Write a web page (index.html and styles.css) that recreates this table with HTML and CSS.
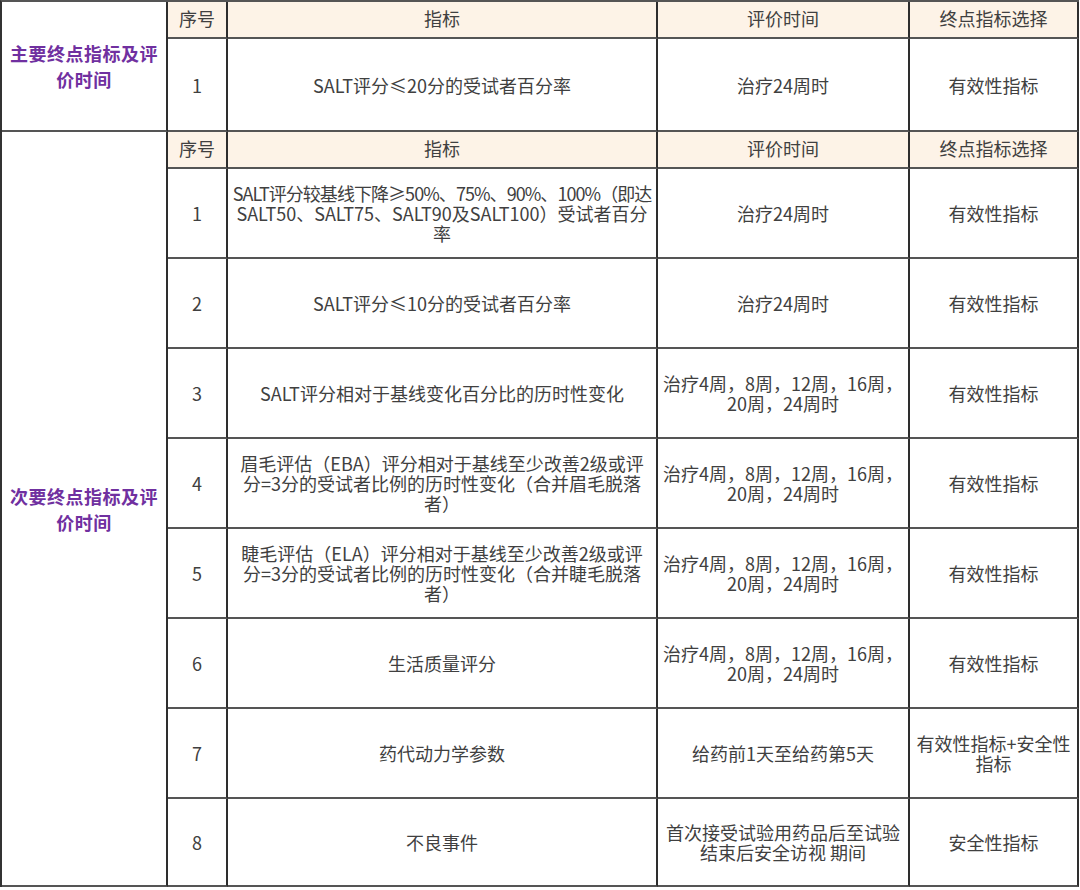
FILE: index.html
```html
<!DOCTYPE html>
<html lang="zh-CN">
<head>
<meta charset="utf-8">
<title>终点指标及评价时间</title>
<link rel="stylesheet" href="styles.css">
</head>
<body>
<table class="grid">
  <colgroup>
    <col class="c-cat">
    <col class="c-no">
    <col class="c-ind">
    <col class="c-time">
    <col class="c-sel">
  </colgroup>
  <tbody>
    <tr class="r-head">
      <td class="cat" rowspan="2">主要终点指标及评<br>价时间</td>
      <td class="head">序号</td>
      <td class="head">指标</td>
      <td class="head">评价时间</td>
      <td class="head">终点指标选择</td>
    </tr>
    <tr class="r-main">
      <td>1</td>
      <td>SALT评分≤20分的受试者百分率</td>
      <td>治疗24周时</td>
      <td>有效性指标</td>
    </tr>
    <tr class="r-head">
      <td class="cat" rowspan="9">次要终点指标及评<br>价时间</td>
      <td class="head">序号</td>
      <td class="head">指标</td>
      <td class="head">评价时间</td>
      <td class="head">终点指标选择</td>
    </tr>
    <tr class="r-body">
      <td>1</td>
      <td><span class="squeeze">SALT评分较基线下降≥50%、75%、90%、100%（即达</span><br>SALT50、SALT75、SALT90及SALT100）受试者百分<br>率</td>
      <td>治疗24周时</td>
      <td>有效性指标</td>
    </tr>
    <tr class="r-body">
      <td>2</td>
      <td>SALT评分≤10分的受试者百分率</td>
      <td>治疗24周时</td>
      <td>有效性指标</td>
    </tr>
    <tr class="r-body">
      <td>3</td>
      <td>SALT评分相对于基线变化百分比的历时性变化</td>
      <td>治疗4周，8周，12周，16周，<br>20周，24周时</td>
      <td>有效性指标</td>
    </tr>
    <tr class="r-body">
      <td>4</td>
      <td>眉毛评估（EBA）评分相对于基线至少改善2级或评<br>分=3分的受试者比例的历时性变化（合并眉毛脱落<br>者）</td>
      <td>治疗4周，8周，12周，16周，<br>20周，24周时</td>
      <td>有效性指标</td>
    </tr>
    <tr class="r-body">
      <td>5</td>
      <td>睫毛评估（ELA）评分相对于基线至少改善2级或评<br>分=3分的受试者比例的历时性变化（合并睫毛脱落<br>者）</td>
      <td>治疗4周，8周，12周，16周，<br>20周，24周时</td>
      <td>有效性指标</td>
    </tr>
    <tr class="r-body">
      <td>6</td>
      <td>生活质量评分</td>
      <td>治疗4周，8周，12周，16周，<br>20周，24周时</td>
      <td>有效性指标</td>
    </tr>
    <tr class="r-body">
      <td>7</td>
      <td>药代动力学参数</td>
      <td>给药前1天至给药第5天</td>
      <td>有效性指标+安全性<br>指标</td>
    </tr>
    <tr class="r-last">
      <td>8</td>
      <td>不良事件</td>
      <td>首次接受试验用药品后至试验<br>结束后安全访视 期间</td>
      <td>安全性指标</td>
    </tr>
  </tbody>
</table>
</body>
</html>
```

FILE: styles.css
```css
html, body {
  margin: 0;
  padding: 0;
  background: #ffffff;
}

body {
  font-family: "Noto Sans CJK SC", "Noto Sans", sans-serif;
  font-size: 18px;
  color: #404040;
}

.grid {
  table-layout: fixed;
  border-collapse: separate;
  border-spacing: 0;
  width: 1079px;
  border-top: 2px solid #555;
  border-left: 2px solid #333;
}

.c-cat { width: 166px; }
.c-no { width: 60px; }
.c-ind { width: 430px; }
.c-time { width: 252px; }
.c-sel { width: 169px; }

.grid td {
  border-right: 2px solid #2e2e2e;
  border-bottom: 2px solid #555;
  padding: 0 2px;
  text-align: center;
  vertical-align: middle;
  line-height: 20px;
  white-space: nowrap;
  overflow: hidden;
}

.r-head { height: 37px; }
.r-head td { padding-bottom: 3px; }
.r-main { height: 93px; }
.r-body { height: 90px; }
.r-last { height: 88px; }

.grid td.head {
  background: #fdf3e7;
}

.grid td.cat {
  color: #7030a0;
  font-weight: 700;
  line-height: 26px;
  letter-spacing: 0.5px;
  background: #ffffff;
  padding-bottom: 0;
}

.squeeze {
  letter-spacing: -0.95px;
}
```
